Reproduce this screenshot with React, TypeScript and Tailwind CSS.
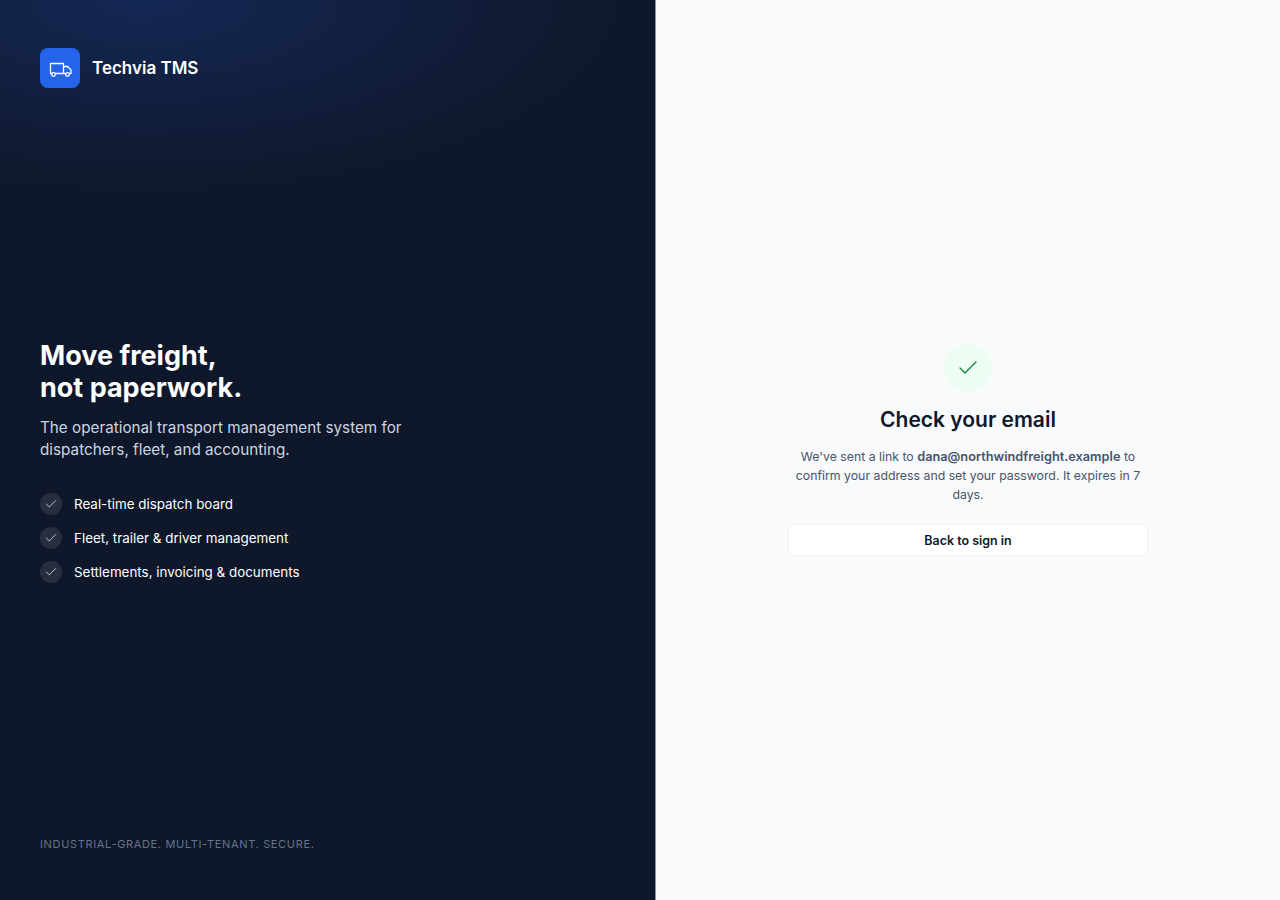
import { Check } from "lucide-react";

const features = [
  "Real-time dispatch board",
  "Fleet, trailer & driver management",
  "Settlements, invoicing & documents",
];

export default function App() {
  return (
    <div className="grid min-h-screen grid-cols-[656px_1fr] font-['Inter','Liberation_Sans',sans-serif]">
      {/* Left brand panel */}
      <aside className="flex h-[900px] flex-col justify-between border-r border-[#8b95a5] bg-[#0f172a] bg-[radial-gradient(ellipse_75%_22%_at_22%_0%,rgba(37,99,235,0.22),transparent)] px-10 pt-12 pb-12 text-white">
        <div className="flex items-center gap-3">
          <div className="flex h-10 w-10 items-center justify-center rounded-lg bg-[#2563eb]">
            <svg viewBox="0 0 24 24" className="h-6 w-6" fill="none" stroke="currentColor" strokeWidth="1.3" strokeLinejoin="round">
              <path d="M3.7 17.5H2.5V7.5H15.5V17.5H7.3" />
              <path d="M15.5 10.5H19.5L23 14V17.5H21.3M15.5 17.5H17.7" />
              <circle cx="5.5" cy="18.5" r="1.8" />
              <circle cx="19.5" cy="18.5" r="1.8" />
            </svg>
          </div>
          <span className="pt-px text-[17px] font-semibold">Techvia TMS</span>
        </div>

        <div>
          <h1 className="-mt-px text-[27px] leading-8 font-bold">
            Move freight,
            <br />
            not paperwork.
          </h1>
          <p className="mt-[13px] max-w-[400px] text-[15.25px] leading-[22px] text-[#cbd5e1]">
            The operational transport management system for dispatchers, fleet, and accounting.
          </p>
          <ul className="mt-8 space-y-3">
            {features.map((f) => (
              <li key={f} className="flex items-center gap-3 text-[13.4px] leading-[22px]">
                <span className="flex h-[22px] w-[22px] items-center justify-center rounded-full bg-white/10">
                  <Check className="h-3.5 w-3.5 text-[#cbd5e1]" strokeWidth={1.5} />
                </span>
                {f}
              </li>
            ))}
          </ul>
        </div>

        <p className="text-[11px] tracking-[0.06em] text-[#64748b] uppercase">
          Industrial-grade. Multi-tenant. Secure.
        </p>
      </aside>

      {/* Right confirmation panel */}
      <main className="flex items-center justify-center bg-[#f8fafc]">
        <div className="flex w-[360px] flex-col items-center text-center">
          <div className="flex h-12 w-12 items-center justify-center rounded-full bg-[#ecfdf3]">
            <Check className="h-6 w-6 text-[#15803d]" strokeWidth={1.25} />
          </div>
          <h2 className="mt-[14px] text-[21px] leading-7 font-semibold text-[#0f172a]">Check your email</h2>
          <p className="mt-[13px] text-[12.3px] leading-[19px] text-[#475569]">
            We've sent a link to <strong className="text-[12.75px] font-semibold">dana@northwindfreight.example</strong> to confirm your address and set your password. It expires in 7 days.
          </p>
          <button className="mt-5 h-8 w-full rounded border border-[#eef1f5] bg-white pt-[2px] text-[12.45px] font-semibold text-[#0f172a]">
            Back to sign in
          </button>
        </div>
      </main>
    </div>
  );
}
